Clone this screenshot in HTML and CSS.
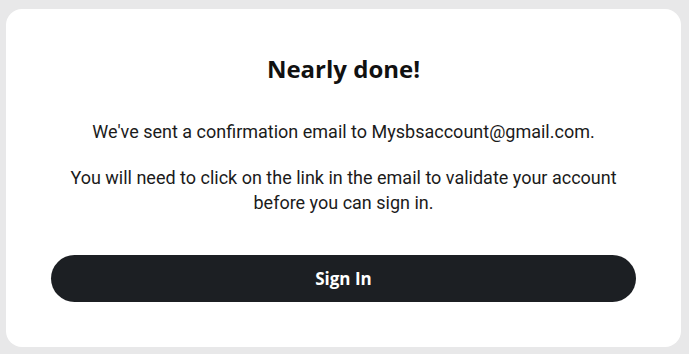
FILE: index.html
```html
<!DOCTYPE html>
<html lang="en">
<head>
    <meta charset="UTF-8">
    <meta name="viewport" content="width=device-width, initial-scale=1.0">
    <title>Nearly done</title>
    <link rel="stylesheet" href="styles.css">
</head>
<body>

    <div class="card">
        <h1>Nearly done!</h1>

        <p>We've sent a confirmation email to Mysbsaccount@gmail.com.</p>
        <p>You will need to click on the link in the email to validate your account before you can sign in.</p>

        <button type="button">Sign In</button>
    </div>

</body>
</html>
```

FILE: styles.css
```css
body {
    font-family: Roboto, "Liberation Sans", sans-serif;
    margin: 0;
    padding: 9px 8px 7px 6px;
    background-color: #e8e8e9;
}

.card {
    background-color: #fff;
    border-radius: 16px;
    padding: 45px 45px 45px;
    text-align: center;
    color: #1b1b1b;
}

h1 {
    font-family: "Open Sans", "Noto Sans", sans-serif;
    font-size: 24px;
    font-weight: 700;
    color: #111;
    margin: 0 0 35px;
    line-height: 30px;
}

p {
    font-size: 18px;
    line-height: 25px;
    margin: 0 0 21px;
}

button {
    display: block;
    width: 100%;
    height: 47px;
    margin-top: 40px;
    font-family: "Open Sans", "Noto Sans", sans-serif;
    font-size: 17px;
    font-weight: 700;
    color: #fff;
    background-color: #1c1f23;
    border: none;
    border-radius: 24px;
    cursor: pointer;
}
```
